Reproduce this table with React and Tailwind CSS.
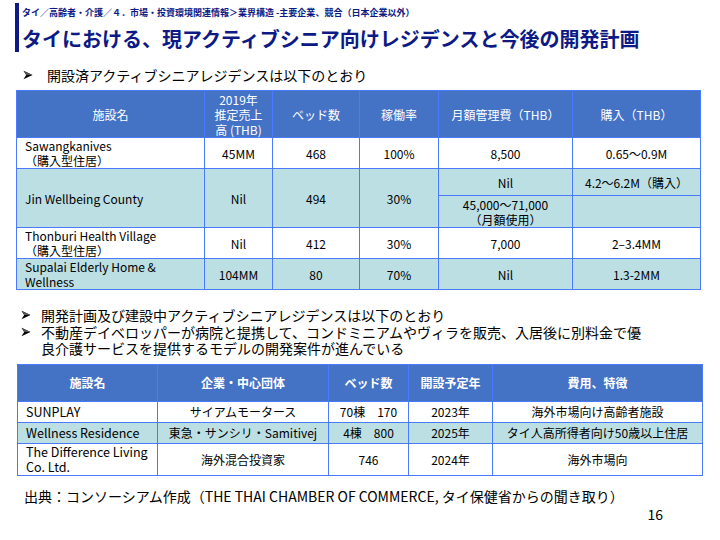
import React from "react";

const FONT = { fontFamily: '"Noto Sans CJK JP", "Noto Sans", sans-serif' };

const existing = [
  { name: ["Sawangkanives", "（購入型住居）"], sales: "45MM", beds: "468", rate: "100%", fee: "8,500", buy: "0.65～0.9M", teal: false },
  { name: ["Thonburi Health Village", "（購入型住居）"], sales: "Nil", beds: "412", rate: "30%", fee: "7,000", buy: "2–3.4MM", teal: false },
  { name: ["Supalai Elderly Home &", "Wellness"], sales: "104MM", beds: "80", rate: "70%", fee: "Nil", buy: "1.3-2MM", teal: true },
];

const planned = [
  { name: ["SUNPLAY"], org: "サイアムモータース", beds: "70棟　170", year: "2023年", note: "海外市場向け高齢者施設", teal: false, h: "h-[21px]" },
  { name: ["Wellness Residence"], org: "東急・サンシリ・Samitivej", beds: "4棟　800", year: "2025年", note: "タイ人高所得者向け50歳以上住居", teal: true, h: "h-[21px]" },
  { name: ["The Difference Living", "Co. Ltd."], org: "海外混合投資家", beds: "746", year: "2024年", note: "海外市場向", teal: false, h: "h-[32px]" },
];

const cell = "border border-[#4a7bff] text-center align-middle p-0";

function Row({ r }) {
  return (
    <tr className={`h-[31px] ${r.teal ? "bg-[#bcdfe4]" : "bg-white"}`}>
      <td className="border border-[#4a7bff] pl-[8px] text-left leading-[15px]">
        {r.name[0]}
        <br />
        {r.name[1]}
      </td>
      <td className={cell}>{r.sales}</td>
      <td className={cell}>{r.beds}</td>
      <td className={cell}>{r.rate}</td>
      <td className={cell}>{r.fee}</td>
      <td className={cell}>{r.buy}</td>
    </tr>
  );
}

// ➢ style bullet (3D arrowhead)
function Arrow({ className }) {
  return (
    <span className={`flex items-center h-[16.5px] ${className}`}>
      <svg width="10" height="10" viewBox="0 0 10 10">
        <path d="M0.5 0.8 L9.5 5 L0.5 9.2 L3.2 5 Z" fill="#000" />
        <path d="M0.5 0.8 L9.5 5 L3.2 5 Z" fill="#555" />
      </svg>
    </span>
  );
}

export default function App() {
  return (
    <div className="w-[720px] h-[540px] bg-white text-black overflow-hidden" style={FONT}>
      {/* HEADER */}
      <div className="flex pt-[3px]">
        <div className="ml-[15px] w-[4px] h-[49px] bg-[#0d1a85]" />
        <div className="pl-[3px]">
          <div className="mt-[4px] text-[9px] leading-[12px] font-bold text-[#0d1a85] whitespace-nowrap">
            タイ／高齢者・介護／４．市場・投資環境関連情報＞業界構造 -主要企業、競合（日本企業以外）
          </div>
          <div className="mt-[8px] text-[20px] leading-[24px] font-bold text-[#0d1a85] whitespace-nowrap">
            タイにおける、現アクティブシニア向けレジデンスと今後の開発計画
          </div>
        </div>
      </div>

      {/* EXISTING */}
      <div className="mt-[13px] flex items-center text-[14px] leading-[20px]">
        <Arrow className="ml-[23px] w-[24px]" />
        <span>開設済アクティブシニアレジデンスは以下のとおり</span>
      </div>

      <table className="mt-[5px] ml-[16px] border-collapse table-fixed text-[12px] leading-[15px]">
        <colgroup>
          <col className="w-[188px]" />
          <col className="w-[68px]" />
          <col className="w-[87px]" />
          <col className="w-[79px]" />
          <col className="w-[134px]" />
          <col className="w-[128px]" />
        </colgroup>
        <thead>
          <tr className="h-[47px] bg-[#4472c4] text-white">
            <th className={`${cell} font-normal`}>施設名</th>
            <th className={`${cell} font-normal`}>
              2019年
              <br />
              推定売上
              <br />
              高 (THB)
            </th>
            <th className={`${cell} font-normal`}>ベッド数</th>
            <th className={`${cell} font-normal`}>稼働率</th>
            <th className={`${cell} font-normal`}>月額管理費（THB）</th>
            <th className={`${cell} font-normal`}>購入（THB）</th>
          </tr>
        </thead>
        <tbody>
          <Row r={existing[0]} />
          <tr className="h-[27px] bg-[#bcdfe4]">
            <td rowSpan={2} className="border border-[#4a7bff] pl-[8px] text-left">
              Jin Wellbeing County
            </td>
            <td rowSpan={2} className={cell}>Nil</td>
            <td rowSpan={2} className={cell}>494</td>
            <td rowSpan={2} className={cell}>30%</td>
            <td className={cell}>Nil</td>
            <td className={cell}>4.2～6.2M（購入）</td>
          </tr>
          <tr className="h-[32px] bg-[#bcdfe4]">
            <td className={`${cell} leading-[15px]`}>
              45,000～71,000
              <br />
              （月額使用）
            </td>
            <td className={cell}></td>
          </tr>
          <Row r={existing[1]} />
          <Row r={existing[2]} />
        </tbody>
      </table>

      {/* PLANNED */}
      <div className="mt-[17px] text-[14px] leading-[16.5px]">
        <div className="flex items-start">
          <Arrow className="ml-[21px] w-[20px]" />
          <span>開発計画及び建設中アクティブシニアレジデンスは以下のとおり</span>
        </div>
        <div className="flex items-start">
          <Arrow className="ml-[21px] w-[20px]" />
          <span>
            不動産デイベロッパーが病院と提携して、コンドミニアムやヴィラを販売、入居後に別料金で優
            <br />
            良介護サービスを提供するモデルの開発案件が進んでいる
          </span>
        </div>
      </div>

      <table className="mt-[7px] ml-[17px] border-collapse table-fixed text-[12px] leading-[15px]">
        <colgroup>
          <col className="w-[140px]" />
          <col className="w-[171px]" />
          <col className="w-[80px]" />
          <col className="w-[84px]" />
          <col className="w-[210px]" />
        </colgroup>
        <thead>
          <tr className="h-[37px] bg-[#4472c4] text-white">
            <th className={`${cell} font-bold`}>施設名</th>
            <th className={`${cell} font-bold`}>企業・中心団体</th>
            <th className={`${cell} font-bold`}>ベッド数</th>
            <th className={`${cell} font-bold`}>開設予定年</th>
            <th className={`${cell} font-bold`}>費用、特徴</th>
          </tr>
        </thead>
        <tbody>
          {planned.map((r) => (
            <tr key={r.name[0]} className={`${r.h} ${r.teal ? "bg-[#bcdfe4]" : "bg-white"}`}>
              <td className="border border-[#4a7bff] pl-[8px] text-left leading-[15px] text-[12.5px]">
                {r.name[0]}
                {r.name[1] && <br />}
                {r.name[1]}
              </td>
              <td className={cell}>{r.org}</td>
              <td className={cell}>{r.beds}</td>
              <td className={cell}>{r.year}</td>
              <td className={cell}>{r.note}</td>
            </tr>
          ))}
        </tbody>
      </table>

      {/* SOURCE */}
      <div className="mt-[10px] ml-[24px] text-[14px] leading-[20px] whitespace-nowrap">
        出典：コンソーシアム作成（THE THAI CHAMBER OF COMMERCE, タイ保健省からの聞き取り）
      </div>
      <div className="pr-[57px] text-right text-[14px] leading-[16px]">16</div>
    </div>
  );
}
